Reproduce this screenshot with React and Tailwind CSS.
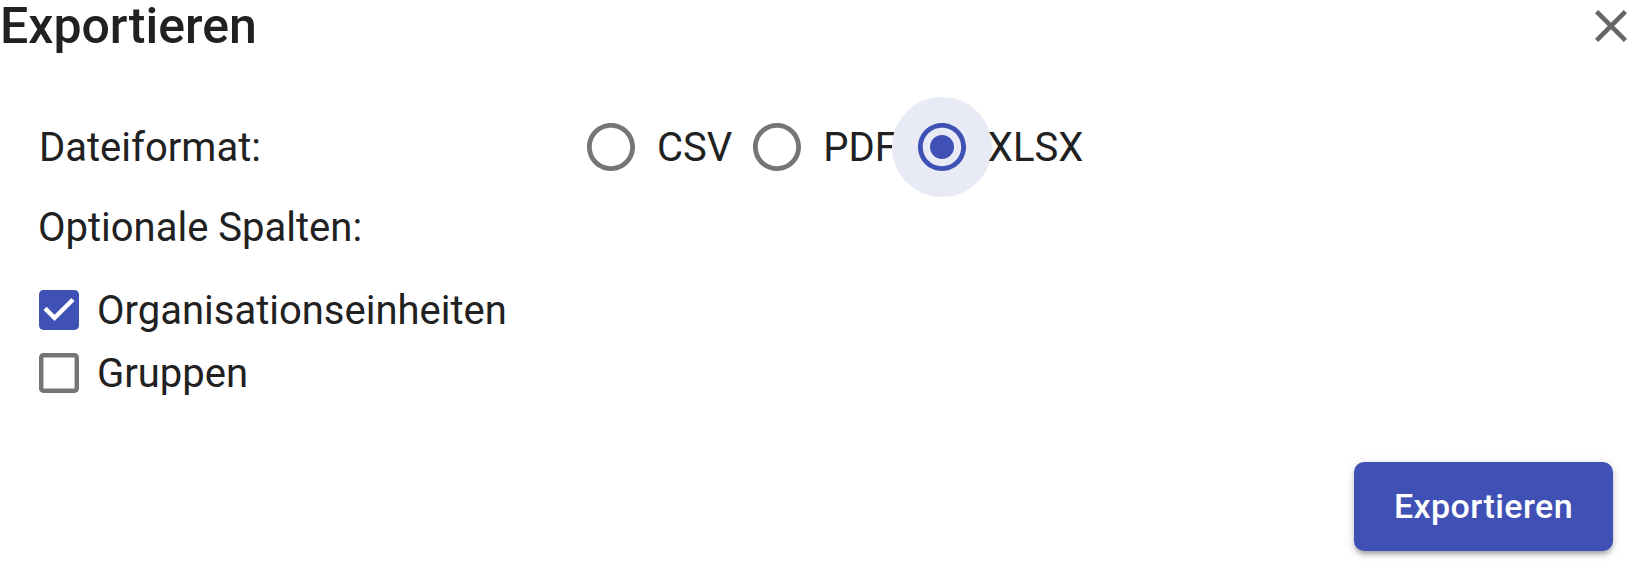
import React, { useState } from "react";

const FONT = "font-['Roboto','Liberation_Sans',sans-serif]";

const RadioIcon = ({ checked }) => (
  <svg viewBox="2 2 20 20" className="w-[48px] h-[48px] relative" fill={checked ? "#3f51b5" : "#757575"}>
    <path d="M12 2C6.48 2 2 6.48 2 12s4.48 10 10 10 10-4.48 10-10S17.52 2 12 2zm0 18c-4.42 0-8-3.58-8-8s3.58-8 8-8 8 3.58 8 8-3.58 8-8 8z" />
    {checked && <path d="M12 7c-2.76 0-5 2.24-5 5s2.24 5 5 5 5-2.24 5-5-2.24-5-5-5z" />}
  </svg>
);

const CheckIcon = ({ checked }) =>
  checked ? (
    <svg viewBox="3 3 18 18" className="w-[40px] h-[40px] shrink-0" fill="#3f51b5">
      <path d="M19 3H5c-1.11 0-2 .9-2 2v14c0 1.1.89 2 2 2h14c1.11 0 2-.9 2-2V5c0-1.1-.89-2-2-2zm-9 14l-5-5 1.41-1.41L10 14.17l7.59-7.59L19 8l-9 9z" />
    </svg>
  ) : (
    <svg viewBox="3 3 18 18" className="w-[40px] h-[40px] shrink-0" fill="#757575">
      <path d="M19 5v14H5V5h14m0-2H5c-1.1 0-2 .9-2 2v14c0 1.1.9 2 2 2h14c1.1 0 2-.9 2-2V5c0-1.1-.9-2-2-2z" />
    </svg>
  );

export default function App() {
  const [format, setFormat] = useState("XLSX");
  const [cols, setCols] = useState({ org: true, groups: false });

  const formats = ["CSV", "PDF", "XLSX"];

  return (
    <div className={`w-[1645px] h-[567px] bg-white text-[#212121] overflow-hidden flex flex-col ${FONT}`}>
      {/* Header */}
      <div className="flex justify-between items-start h-[97px]">
        <h2 className="text-[50px] leading-[53px] font-medium">Exportieren</h2>
        <svg viewBox="5 5 14 14" className="w-[32px] h-[32px] mt-[10px] mr-[18px]" fill="#666666">
          <path d="M19 6.41 17.59 5 12 10.59 6.41 5 5 6.41 10.59 12 5 17.59 6.41 19 12 13.41 17.59 19 19 17.59 13.41 12z" />
        </svg>
      </div>

      {/* Dateiformat */}
      <div className="flex items-center h-[100px] pl-[39px] text-[40px] leading-[48px]">
        <div className="w-[548px] pt-[2px]">Dateiformat:</div>
        <div className="flex items-center">
          {formats.map((f, i) => (
            <label key={f} className="flex items-center cursor-pointer" onClick={() => setFormat(f)}>
              <span className="relative w-[48px] h-[48px] flex items-center justify-center">
                {format === f && (
                  <span className="absolute w-[100px] h-[100px] rounded-full bg-[#e8eaf6] -left-[26px] -top-[26px]" />
                )}
                <RadioIcon checked={format === f} />
              </span>
              <span className={`ml-[22px] pt-[2px] relative ${i < formats.length - 1 ? "mr-[21px]" : ""}`}>{f}</span>
            </label>
          ))}
        </div>
      </div>

      {/* Optionale Spalten */}
      <div className="pl-[38px] mt-[7px] text-[40px] leading-[48px]">Optionale Spalten:</div>

      <div className="flex flex-col mt-[26px] pl-[39px] text-[40px] leading-[48px]">
        <label className="flex items-center h-[63px] cursor-pointer" onClick={() => setCols((c) => ({ ...c, org: !c.org }))}>
          <CheckIcon checked={cols.org} />
          <span className="ml-[18px] pt-[3px]">Organisationseinheiten</span>
        </label>
        <label className="flex items-center h-[63px] cursor-pointer" onClick={() => setCols((c) => ({ ...c, groups: !c.groups }))}>
          <CheckIcon checked={cols.groups} />
          <span className="ml-[18px] pt-[3px]">Gruppen</span>
        </label>
      </div>

      {/* Footer */}
      <div className="flex justify-end pr-[32px] mt-[58px]">
        <button className="w-[259px] h-[89px] rounded-[10px] bg-[#3f51b5] text-white text-[34px] font-medium tracking-[0.4px] shadow-[0_5px_5px_-3px_rgba(0,0,0,0.2),0_4px_5px_0_rgba(0,0,0,0.14),0_2px_12px_0_rgba(0,0,0,0.12)]">
          Exportieren
        </button>
      </div>
    </div>
  );
}
